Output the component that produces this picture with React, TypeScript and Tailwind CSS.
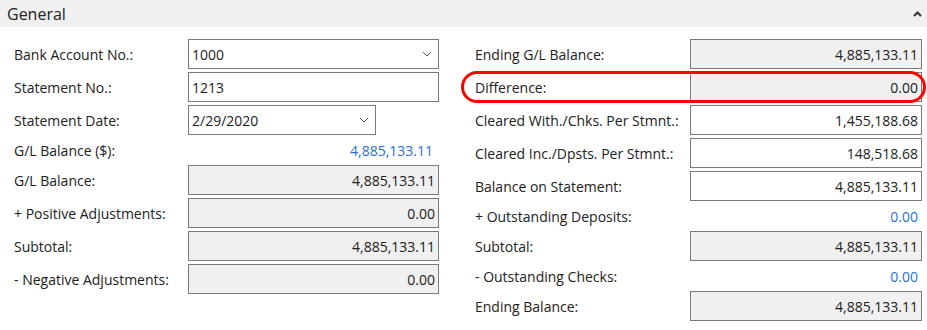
import React from "react";

const ChevronDown = () => (
  <svg width="10" height="6" viewBox="0 0 10 6" className="shrink-0">
    <path d="M1 1 L5 5 L9 1" fill="none" stroke="#555" strokeWidth="1" />
  </svg>
);

const CaretUp = () => (
  <svg width="9" height="6" viewBox="0 0 9 6" className="shrink-0">
    <path d="M1 5 L4.5 1.5 L8 5" fill="none" stroke="#333" strokeWidth="2" />
  </svg>
);

type Row =
  | { kind: "input"; label: string; value: string; readOnly?: boolean; align?: "left" | "right"; dropdown?: boolean; narrow?: boolean }
  | { kind: "text"; label: string; value: string };

const leftRows: Row[] = [
  { kind: "input", label: "Bank Account No.:", value: "1000", align: "left", dropdown: true },
  { kind: "input", label: "Statement No.:", value: "1213", align: "left" },
  { kind: "input", label: "Statement Date:", value: "2/29/2020", align: "left", dropdown: true, narrow: true },
  { kind: "text", label: "G/L Balance ($):", value: "4,885,133.11" },
  { kind: "input", label: "G/L Balance:", value: "4,885,133.11", readOnly: true },
  { kind: "input", label: "+ Positive Adjustments:", value: "0.00", readOnly: true },
  { kind: "input", label: "Subtotal:", value: "4,885,133.11", readOnly: true },
  { kind: "input", label: "- Negative Adjustments:", value: "0.00", readOnly: true },
];

const rightRows: Row[] = [
  { kind: "input", label: "Ending G/L Balance:", value: "4,885,133.11", readOnly: true },
  { kind: "input", label: "Difference:", value: "0.00", readOnly: true },
  { kind: "input", label: "Cleared With./Chks. Per Stmnt.:", value: "1,455,188.68" },
  { kind: "input", label: "Cleared Inc./Dpsts. Per Stmnt.:", value: "148,518.68" },
  { kind: "input", label: "Balance on Statement:", value: "4,885,133.11" },
  { kind: "text", label: "+ Outstanding Deposits:", value: "0.00" },
  { kind: "input", label: "Subtotal:", value: "4,885,133.11", readOnly: true },
  { kind: "text", label: "- Outstanding Checks:", value: "0.00" },
  { kind: "input", label: "Ending Balance:", value: "4,885,133.11", readOnly: true },
];

function FieldRow({ row, cols, textPad }: { row: Row; cols: string; textPad: string }) {
  if (row.kind === "text") {
    return (
      <div className={`grid ${cols} h-[24px] items-center`}>
        <span className="whitespace-nowrap">{row.label}</span>
        <span className={`text-right text-[#2a6fd1] ${textPad}`}>{row.value}</span>
      </div>
    );
  }
  return (
    <div className={`grid ${cols} h-[30px] items-center`}>
      <span className="whitespace-nowrap">{row.label}</span>
      <div className="flex">
        <div
          className={`h-[30px] border border-[#7a7a7a] flex items-center ${
            row.readOnly ? "bg-[#f0f0f0]" : "bg-white"
          } ${row.narrow ? "w-[188px]" : "w-full"} ${
            row.align === "left" ? "pl-[3px] pr-[6px] justify-between" : "pr-[3px] justify-end"
          }`}
        >
          <span>{row.value}</span>
          {row.dropdown && <ChevronDown />}
        </div>
      </div>
    </div>
  );
}

export default function App() {
  return (
    <div className="relative w-[927px] h-[330px] bg-white text-[#212121] text-[14px] font-['Open_Sans',sans-serif] overflow-hidden">
      <div className="h-[27px] bg-[#f0f0f0] flex items-center justify-between pl-[7px] pr-[5px]">
        <span className="text-[16px]">General</span>
        <CaretUp />
      </div>
      <div className="flex pt-[12px] pl-[14px]">
        <div className="w-[425px] flex flex-col gap-[3px]">
          {leftRows.map((r, i) => (
            <FieldRow key={i} row={r} cols="grid-cols-[174px_251px]" textPad="pr-[6px]" />
          ))}
        </div>
        <div className="ml-[36px] w-[447px] flex flex-col gap-[3px]">
          {rightRows.map((r, i) => (
            <FieldRow key={i} row={r} cols="grid-cols-[215px_232px]" textPad="pr-[4px]" />
          ))}
        </div>
      </div>
      <div className="absolute left-[461px] top-[71px] w-[465px] h-[32px] rounded-full border-[3px] border-[#ff0000]" />
    </div>
  );
}
